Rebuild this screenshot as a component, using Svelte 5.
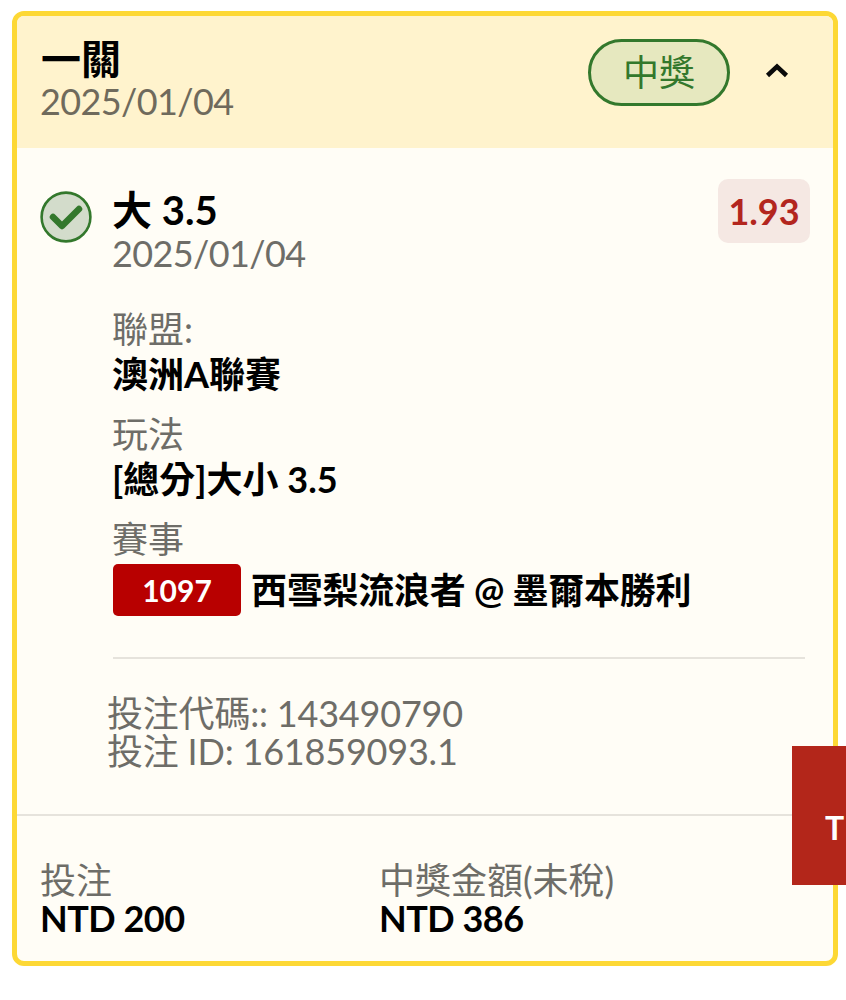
<script>
  const details = [
    { label: '聯盟:', value: '澳洲A聯賽' },
    { label: '玩法', value: '[總分]大小 3.5' }
  ];
</script>

<div class="page">
  <div class="card">
    <div class="head">
      <div class="head-text">
        <div class="title">一關</div>
        <div class="date">2025/01/04</div>
      </div>
      <div class="status">中獎</div>
      <svg class="chevron" width="26" height="16" viewBox="0 0 26 16">
        <path d="M3.5 13.5 L13 4.5 L22.5 13.5" fill="none" stroke="#0a0a0a" stroke-width="4.5" />
      </svg>
    </div>

    <div class="body">
      <div class="selection">
        <svg class="tick" width="52" height="52" viewBox="0 0 52 52">
          <circle cx="26" cy="26" r="24.4" fill="#d3dccb" stroke="#33782c" stroke-width="2.6" />
          <path d="M13 26 L22 35 L39 18" fill="none" stroke="#33782c" stroke-width="6.5" stroke-linecap="round" stroke-linejoin="round" />
        </svg>
        <div class="selection-main">
          <div class="sel-top">
            <div class="sel-text">
              <div class="pick">大 3.5</div>
              <div class="date">2025/01/04</div>
            </div>
            <div class="odds">1.93</div>
          </div>

          {#each details as d}
            <div class="detail">
              <div class="label">{d.label}</div>
              <div class="value">{d.value}</div>
            </div>
          {/each}

          <div class="detail">
            <div class="label">賽事</div>
            <div class="event">
              <span class="code">1097</span>
              <span class="value">西雪梨流浪者 @ 墨爾本勝利</span>
            </div>
          </div>

          <div class="inner-line"></div>
        </div>
      </div>

      <div class="ids">
        <div>投注代碼:: 143490790</div>
        <div>投注 ID: 161859093.1</div>
      </div>
    </div>

    <div class="foot">
      <div class="foot-col">
        <div class="label">投注</div>
        <div class="value amount">NTD 200</div>
      </div>
      <div class="foot-col">
        <div class="label">中獎金額(未稅)</div>
        <div class="value amount">NTD 386</div>
      </div>
    </div>
  </div>

  <div class="side-tab">T</div>
</div>

<style>
  :global(body) {
    margin: 0;
    background: #fff;
    overflow: hidden;
  }

  .page {
    position: relative;
    width: 846px;
    height: 1000px;
    padding: 11px 8px 0 12px;
    box-sizing: border-box;
    overflow: hidden;
    font-family: Lato, "Noto Sans CJK TC", sans-serif;
    color: #000;
  }

  .card {
    border: 5px solid #fdd835;
    border-radius: 12px;
    background: #fffdf6;
    overflow: hidden;
    height: 955px;
    box-sizing: border-box;
  }

  .head {
    display: flex;
    align-items: flex-start;
    height: 132px;
    background: #fff3cd;
    padding: 21px 0 0 23px;
    box-sizing: border-box;
  }

  .head-text {
    flex: 1;
  }

  .title {
    margin-left: 1px;
    font-size: 40px;
    font-weight: 700;
    line-height: 45px;
  }

  .date {
    font-size: 36px;
    line-height: 40px;
    letter-spacing: -0.6px;
    color: #6e6d68;
  }

  .head .date {
    line-height: 38px;
    color: #6f6a5c;
  }

  .status {
    width: 142px;
    height: 67px;
    margin: 2px 34px 0 0;
    box-sizing: border-box;
    border: 3px solid #33782c;
    border-radius: 34px;
    background: #e6e8bf;
    color: #33782c;
    font-size: 36px;
    line-height: 61px;
    text-align: center;
  }

  .chevron {
    margin: 25px 43px 0 0;
  }

  .body {
    height: 668px;
    box-sizing: border-box;
    padding: 31px 23px 0 23px;
    border-bottom: 2px solid #e6e3dc;
  }

  .selection {
    display: flex;
    align-items: flex-start;
    gap: 20px;
  }

  .tick {
    flex: none;
    margin-top: 12px;
  }

  .selection-main {
    flex: 1;
  }

  .sel-top {
    display: flex;
    justify-content: space-between;
    align-items: flex-start;
  }

  .sel-text {
    margin-top: 8px;
  }

  .pick {
    font-size: 40px;
    font-weight: 700;
    line-height: 46px;
  }

  .odds {
    width: 92px;
    height: 64px;
    border-radius: 10px;
    background: #f5e8e3;
    color: #b3261e;
    font-size: 36px;
    font-weight: 700;
    line-height: 64px;
    text-align: center;
  }

  .detail {
    margin-top: 16px;
  }

  .sel-top + .detail {
    margin-top: 34px;
  }

  .label {
    font-size: 36px;
    line-height: 45px;
    color: #6e6d68;
  }

  .value {
    font-size: 36px;
    font-weight: 700;
    line-height: 44px;
  }

  .event {
    display: flex;
    align-items: center;
    gap: 10px;
    margin: 2px 0 0 1px;
  }

  .event .value {
    letter-spacing: -0.25px;
  }

  .code {
    width: 128px;
    height: 52px;
    border-radius: 5px;
    background: #b80000;
    color: #fff;
    font-size: 30px;
    font-weight: 700;
    line-height: 52px;
    text-align: center;
  }

  .inner-line {
    height: 2px;
    background: #e6e3dc;
    margin: 41px 5px 0 1px;
  }

  .ids {
    margin: 35px 0 0 67px;
    font-size: 36px;
    line-height: 38px;
    letter-spacing: -0.2px;
    color: #6e6d68;
  }

  .foot {
    display: flex;
    padding: 45px 0 0 23px;
  }

  .foot-col {
    width: 339px;
  }

  .foot .label,
  .foot .value {
    line-height: 38px;
  }

  .amount {
    letter-spacing: -0.5px;
  }

  .side-tab {
    position: absolute;
    left: 792px;
    top: 746px;
    width: 54px;
    height: 139px;
    box-sizing: border-box;
    padding-left: 33px;
    background: #b3261a;
    color: #fff;
    font-size: 32px;
    font-weight: 700;
    line-height: 164px;
  }
</style>
